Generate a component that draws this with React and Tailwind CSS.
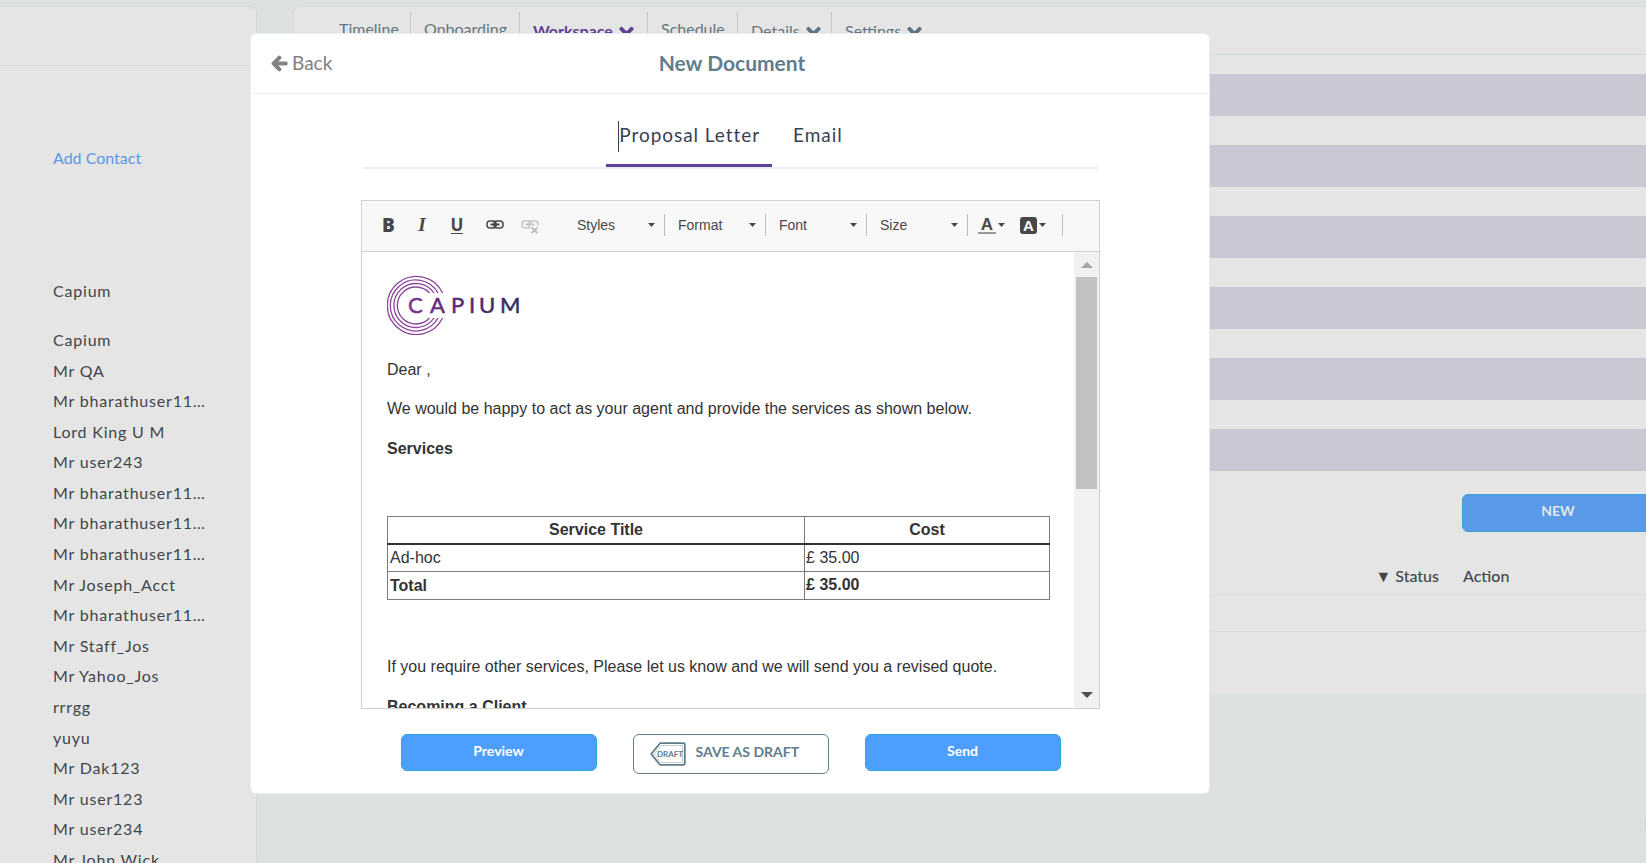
import React, { useState } from "react";
import { FaArrowLeft, FaChevronDown } from "react-icons/fa";

const NAV_ITEMS = [
  { label: "Timeline", width: "w-[85px]" },
  { label: "Onboarding", width: "w-[109px]" },
  { label: "Workspace", width: "w-[128px]", active: true, menu: true },
  { label: "Schedule", width: "w-[90px]" },
  { label: "Details", width: "w-[94px]", menu: true },
  { label: "Settings", width: "w-[104px]", menu: true },
];

const CONTACTS = [
  "Capium",
  "Mr QA",
  "Mr bharathuser11…",
  "Lord King U M",
  "Mr user243",
  "Mr bharathuser11…",
  "Mr bharathuser11…",
  "Mr bharathuser11…",
  "Mr Joseph_Acct",
  "Mr bharathuser11…",
  "Mr Staff_Jos",
  "Mr Yahoo_Jos",
  "rrrgg",
  "yuyu",
  "Mr Dak123",
  "Mr user123",
  "Mr user234",
  "Mr John Wick",
];

const STRIPES = [1, 2, 3, 4, 5, 6];

const Sidebar = () => (
  <aside className="w-[257px] shrink-0 overflow-hidden rounded-tr-md border-t border-r border-[#d1d9dd] bg-[#e5e5e5] text-[#3f464b]">
    <div className="h-[59px] border-b border-[#d9dcde]" />
    <div className="pl-[53px] pt-[80px]">
      <a href="#add-contact" className="block text-base leading-6 text-[#5899e8]">
        Add Contact
      </a>
      <p className="mt-[109px] text-base leading-6 tracking-wider">Capium</p>
      <ul className="mt-[22px] flex h-[550px] flex-col justify-between text-base tracking-wider">
        {CONTACTS.map((name, i) => (
          <li key={i} className="h-[30px] leading-[30px]">
            {name}
          </li>
        ))}
      </ul>
    </div>
  </aside>
);

const TopNav = () => (
  <nav className="flex h-[48px] border-b border-[#d1d9dd] pl-8 pt-[5px] text-base text-[#66757d]">
    {NAV_ITEMS.map(({ label, width, active, menu }) => (
      <a
        key={label}
        href={`#${label.toLowerCase()}`}
        className={`${width} flex h-[34px] shrink-0 items-center gap-[6px] border-r border-[#c4c8ca] pl-[13px] last:border-r-0 ${
          menu ? "pt-1" : ""
        } ${active ? "font-bold text-[#5f3f96]" : ""}`}
      >
        {label}
        {menu && (
          <FaChevronDown
            size={15}
            stroke="currentColor"
            strokeWidth={50}
            className={active ? "" : "text-[#607380]"}
            aria-hidden="true"
          />
        )}
      </a>
    ))}
  </nav>
);

const Workspace = () => (
  <main className="h-[688px] min-w-0 flex-1 overflow-hidden rounded-tl-md border-t border-l border-[#d1d9dd] bg-[#e5e5e5]">
    <TopNav />
    <div className="flex flex-col gap-[29px] pt-[19px]">
      {STRIPES.map((n) => (
        <div key={n} className="h-[42px] bg-[#ccc7d5]" />
      ))}
    </div>
    <div className="mt-[23px] flex justify-end">
      <button className="-mr-2 h-[38px] w-[192px] rounded-md border border-[#3f9fd0] bg-[#589ae8] pb-1 text-sm font-bold text-[#e5e5e5]">
        NEW
      </button>
    </div>
    <table className="mt-[25px] w-full text-base leading-[37px] text-[#3f464b]">
      <thead>
        <tr className="border-b-2 border-[#dfe0e1]">
          <th className="pr-6 text-right font-medium">▼ Status</th>
          <th className="w-[183px] text-left font-medium">Action</th>
        </tr>
      </thead>
      <tbody>
        <tr className="h-[36px] border-b border-[#dcdddf]">
          <td colSpan={2} />
        </tr>
      </tbody>
    </table>
  </main>
);

const CapiumLogo = () => (
  <svg width="136" height="60" viewBox="0 0 136 60" role="img" aria-label="Capium">
    <defs>
      <linearGradient id="capium" x1="0" y1="0" x2="134" y2="0" gradientUnits="userSpaceOnUse">
        <stop offset="0" stopColor="#8f4a9c" />
        <stop offset="0.3" stopColor="#6c2a7e" />
        <stop offset="1" stopColor="#2f2e5e" />
      </linearGradient>
    </defs>
    <g fill="none" stroke="#8a4799" strokeWidth="1.3">
      <path d="M55.500 18A29 29 0 1 0 55.500 43" />
      <path d="M51 18A25.500 25.500 0 1 0 51 43" />
      <path d="M47 18A22 22 0 1 0 47 43" />
      <path d="M42.500 18A18.500 18.500 0 1 0 42.500 43" />
    </g>
    <text
      x="21 43 64 82 92 113"
      y="38"
      fill="url(#capium)"
      stroke="url(#capium)"
      strokeWidth="0.500"
      className="font-['Lato',sans-serif] text-[22px] font-normal"
    >
      CAPIUM
    </text>
  </svg>
);

const Caret = () => (
  <svg width="7" height="4" viewBox="0 0 7 4" aria-hidden="true" className="shrink-0">
    <path d="M0 0h7L3.500 4z" fill="#474747" />
  </svg>
);

const LinkIcon = ({ broken }) => (
  <svg width="18" height="18" viewBox="0 0 18 18" fill="none" aria-hidden="true">
    <g stroke={broken ? "#c3c3c3" : "#474747"} strokeWidth="1.500">
      <rect x="1" y="5" width="9" height="7" rx="3" />
      <rect x="8" y="5" width="9" height="7" rx="3" />
      <path d="M4.500 8.500h9" strokeWidth="2" />
    </g>
    {broken && (
      <>
        <path d="M9 9.500h9V18H9z" fill="#f8f8f8" />
        <path d="M10.500 11.500l6 5.500m0-5.500l-6 5.500" stroke="#b9b9b9" strokeWidth="1.700" />
      </>
    )}
  </svg>
);

const Combo = ({ label }) => (
  <div className="flex h-[22px] w-[101px] items-center border-r border-[#bcbcbc] pl-[13px] pr-[9px]">
    <select
      aria-label={label}
      className="min-w-0 flex-1 appearance-none bg-transparent text-sm text-[#484848] outline-none"
    >
      <option>{label}</option>
    </select>
    <Caret />
  </div>
);

const Toolbar = () => (
  <div className="flex h-[51px] items-center border-b border-[#d1d1d1] bg-[#f8f8f8] pb-[2px] font-['Liberation_Sans',sans-serif] text-[#474747]">
    <div className="flex items-center pl-[10px]">
      <button aria-label="Bold" className="w-[33px] font-['Open_Sans',sans-serif] text-[19px] font-extrabold leading-5">
        B
      </button>
      <button
        aria-label="Italic"
        className="w-[34px] font-['Liberation_Serif',serif] text-[19px] font-bold italic leading-5"
      >
        I
      </button>
      <button aria-label="Underline" className="flex w-[36px] justify-center">
        <span className="border-b border-[#474747] font-['Open_Sans',sans-serif] text-[17px] font-bold leading-4">
          U
        </span>
      </button>
      <button aria-label="Link" className="flex w-[40px] justify-center">
        <LinkIcon />
      </button>
      <button aria-label="Unlink" disabled className="flex w-[30px] justify-center">
        <LinkIcon broken />
      </button>
    </div>
    <div className="flex pl-[19px]">
      <Combo label="Styles" />
      <Combo label="Format" />
      <Combo label="Font" />
      <Combo label="Size" />
    </div>
    <div className="flex h-[22px] items-center gap-[15px] border-r border-[#bcbcbc] pl-[10px] pr-[16px]">
      <button aria-label="Text Color" className="flex items-center gap-[2px]">
        <span className="w-[18px] border-b-2 border-[#999999] text-[17px] font-bold leading-[15px]">A</span>
        <Caret />
      </button>
      <button aria-label="Background Color" className="flex items-center gap-[2px]">
        <span className="size-[17px] rounded-[3px] bg-[#474747] text-[15px] font-bold leading-[17px] text-white">
          A
        </span>
        <Caret />
      </button>
    </div>
  </div>
);

const Letter = () => (
  <div className="min-w-0 flex-1 overflow-hidden pl-[25px] pr-[24px] pt-[23px] font-['Liberation_Sans',sans-serif] text-base leading-[26px] text-[#333333]">
    <CapiumLogo />
    <p className="mt-[22px]">Dear ,</p>
    <p className="mt-[13px]">We would be happy to act as your agent and provide the services as shown below.</p>
    <p className="mt-[14px] font-bold">Services</p>
    <table className="mt-[54px] w-full border-collapse border border-[#7b7b7b]">
      <thead>
        <tr className="border-b-2 border-[#333333]">
          <th className="w-[63%] border-r border-[#7b7b7b]">Service Title</th>
          <th>Cost</th>
        </tr>
      </thead>
      <tbody>
        <tr className="border-b border-[#7b7b7b]">
          <td className="border-r border-[#7b7b7b] px-[2px]">Ad-hoc</td>
          <td className="px-px">£ 35.00</td>
        </tr>
        <tr className="font-bold">
          <td className="border-r border-[#7b7b7b] px-[2px]">Total</td>
          <td className="px-px pb-px">£ 35.00</td>
        </tr>
      </tbody>
    </table>
    <p className="mt-[54px]">If you require other services, Please let us know and we will send you a revised quote.</p>
    <p className="mt-[14px] font-bold">Becoming a Client</p>
  </div>
);

const ScrollTrack = () => (
  <div className="flex w-[25px] shrink-0 flex-col items-center bg-[#f1f1f1]">
    <div className="flex h-[25px] items-center">
      <svg width="12" height="6" viewBox="0 0 12 6" aria-hidden="true">
        <path d="M6 0l6 6H0z" fill="#a3a3a3" />
      </svg>
    </div>
    <div className="h-[212px] w-[21px] bg-[#c1c1c1]" />
    <div className="mt-auto flex h-[27px] items-center">
      <svg width="12" height="6" viewBox="0 0 12 6" aria-hidden="true">
        <path d="M0 0h12L6 6z" fill="#505050" />
      </svg>
    </div>
  </div>
);

const DraftIcon = () => (
  <svg width="36" height="24" viewBox="0 0 36 24" aria-hidden="true">
    <path
      d="M10 1.200h23.500a1.300 1.300 0 0 1 1.300 1.300v19a1.300 1.300 0 0 1-1.300 1.300H10L1.200 12z"
      fill="#ffffff"
      stroke="#607d8b"
      strokeWidth="1.800"
      strokeLinejoin="round"
    />
    <path d="M11 3.500h21.500v17H11L3.800 12z" fill="none" stroke="#c3ced4" strokeWidth="1" />
    <text x="20" y="15" textAnchor="middle" fill="#607d8b" className="font-['Lato',sans-serif] text-[8px] font-bold">
      DRAFT
    </text>
  </svg>
);

const Tabs = () => {
  const [tab, setTab] = useState("Proposal Letter");

  return (
    <div className="mx-[2px] flex justify-center gap-[9px] border-b-2 border-[#e9eef4] text-[19px] text-[#374151]">
      {["Proposal Letter", "Email"].map((name) => (
        <button
          key={name}
          onClick={() => setTab(name)}
          className={`h-[46px] border-b-[3px] px-3 pb-[14px] tracking-wider ${
            tab === name ? "border-[#5f3f96]" : "border-transparent"
          }`}
        >
          <span className={`flex h-[31px] items-center pb-[2px] ${tab === name ? "border-l border-[#374151]" : ""}`}>
            {name}
          </span>
        </button>
      ))}
    </div>
  );
};

const DocumentModal = () => (
  <div className="fixed inset-0 pl-[250px] pr-[436px] pt-[33px]">
    <div role="dialog" aria-label="New Document" className="rounded-md border border-[#e9edf1] bg-white pb-[19px]">
      <header className="grid h-[60px] grid-cols-3 items-center border-b border-[#eef1f4] px-5">
        <button className="flex items-center gap-1 justify-self-start text-[19px] text-[#808080]">
          <FaArrowLeft size={17} stroke="currentColor" strokeWidth={40} aria-hidden="true" />
          Back
        </button>
        <h1 className="justify-self-center pb-[2px] pl-1 text-[21px] font-bold leading-7 text-[#607d8b]">
          New Document
        </h1>
      </header>

      <div className="pl-[110px] pr-[109px] pt-[27px]">
        <Tabs />
        <div className="mt-[31px] border border-[#d1d1d1]">
          <Toolbar />
          <div className="flex h-[456px]">
            <Letter />
            <ScrollTrack />
          </div>
        </div>
        <div className="mt-[25px] flex items-start justify-center gap-[36px] text-sm font-bold">
          <button className="h-[37px] w-[196px] rounded-md border border-[#2ba6dd] bg-[#4d9fff] pb-1 text-white">
            Preview
          </button>
          <button className="flex h-[40px] w-[196px] items-center gap-[10px] rounded-md border border-[#607d8b] pl-4 text-[#607d8b]">
            <DraftIcon />
            <span className="pb-1">SAVE AS DRAFT</span>
          </button>
          <button className="h-[37px] w-[196px] rounded-md border border-[#2ba6dd] bg-[#4d9fff] pb-1 text-white">
            Send
          </button>
        </div>
      </div>
    </div>
  </div>
);

export default function App() {
  return (
    <div className="flex h-screen gap-[36px] overflow-hidden bg-[#dce0e1] pt-[6px] font-['Lato',sans-serif]">
      <Sidebar />
      <Workspace />
      <DocumentModal />
      <div className="fixed -right-[58px] bottom-[9px] size-[60px] rounded-full border border-[#e2e2e4] bg-[#cfc6d3]" />
    </div>
  );
}
